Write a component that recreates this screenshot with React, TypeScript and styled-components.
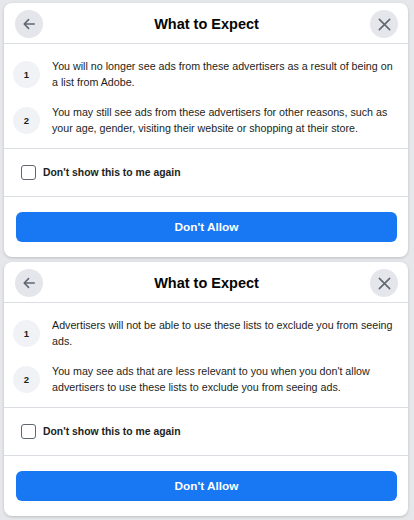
import React from "react";
import styled, { createGlobalStyle } from "styled-components";

type Step = { n: number; text: string };

type DialogProps = {
  steps: Step[];
};

const dialogs: Step[][] = [
  [
    {
      n: 1,
      text: "You will no longer see ads from these advertisers as a result of being on a list from Adobe.",
    },
    {
      n: 2,
      text: "You may still see ads from these advertisers for other reasons, such as your age, gender, visiting their website or shopping at their store.",
    },
  ],
  [
    {
      n: 1,
      text: "Advertisers will not be able to use these lists to exclude you from seeing ads.",
    },
    {
      n: 2,
      text: "You may see ads that are less relevant to you when you don't allow advertisers to use these lists to exclude you from seeing ads.",
    },
  ],
];

const BackIcon = () => (
  <svg width="14" height="14" viewBox="0 0 16 16" fill="none">
    <path d="M14 8H2.5M7.5 3L2.5 8l5 5" stroke="#606770" strokeWidth="1.8" strokeLinecap="round" strokeLinejoin="round" />
  </svg>
);

const CloseIcon = () => (
  <svg width="15" height="15" viewBox="0 0 16 16" fill="none">
    <path d="M2.5 2.5l11 11M13.5 2.5l-11 11" stroke="#606770" strokeWidth="1.7" strokeLinecap="round" />
  </svg>
);

const Dialog: React.FC<DialogProps> = ({ steps }) => (
  <Card>
    <Header>
      <RoundButton aria-label="Back">
        <BackIcon />
      </RoundButton>
      <Title>What to Expect</Title>
      <RoundButton aria-label="Close">
        <CloseIcon />
      </RoundButton>
    </Header>
    <Body>
      {steps.map((s) => (
        <StepRow key={s.n}>
          <Badge>{s.n}</Badge>
          <StepText>{s.text}</StepText>
        </StepRow>
      ))}
    </Body>
    <CheckRow>
      <Box />
      <CheckLabel>Don't show this to me again</CheckLabel>
    </CheckRow>
    <Footer>
      <PrimaryButton>Don't Allow</PrimaryButton>
    </Footer>
  </Card>
);

export default function App() {
  return (
    <>
      <GlobalStyle />
      <Page>
        {dialogs.map((steps, i) => (
          <Dialog key={i} steps={steps} />
        ))}
      </Page>
    </>
  );
}

const GlobalStyle = createGlobalStyle`
  html, body {
    margin: 0;
    background: #e6e7ea;
  }
  body {
    font-family: "Liberation Sans", Arial, sans-serif;
    color: #1c1e21;
  }
`;

const Page = styled.div`
  display: flex;
  flex-direction: column;
  gap: 5px;
  padding: 3px 6px 3px 4px;
  width: 414px;
  box-sizing: border-box;
`;

const Card = styled.div`
  background: #fff;
  border-radius: 8px;
  box-shadow: 0 1px 3px rgba(0, 0, 0, 0.18);
  overflow: hidden;
`;

const Header = styled.div`
  display: grid;
  grid-template-columns: 28px 1fr 28px;
  align-items: center;
  height: 40px;
  padding: 0 10px 0 11px;
  border-bottom: 1px solid #dadde1;
`;

const RoundButton = styled.div`
  width: 28px;
  height: 28px;
  border-radius: 50%;
  background: #e4e6eb;
  display: flex;
  align-items: center;
  justify-content: center;
  margin-top: 2px;
`;

const Title = styled.div`
  text-align: center;
  font-size: 14.5px;
  font-weight: 700;
  color: #050505;
  margin-top: 1px;
`;

const Body = styled.div`
  display: flex;
  flex-direction: column;
  gap: 14px;
  padding: 14px 12px 12px 9px;
  height: 105px;
  box-sizing: border-box;
  border-bottom: 1px solid #dadde1;
`;

const StepRow = styled.div`
  display: flex;
  align-items: center;
  gap: 12px;
`;

const Badge = styled.div`
  flex: none;
  width: 27px;
  height: 27px;
  border-radius: 50%;
  background: #f0f2f5;
  display: flex;
  align-items: center;
  justify-content: center;
  font-size: 9.5px;
  font-weight: 700;
  color: #1c1e21;
`;

const StepText = styled.div`
  font-size: 10.7px;
  line-height: 16px;
  color: #1c1e21;
`;

const CheckRow = styled.div`
  display: flex;
  align-items: center;
  gap: 7px;
  height: 47px;
  padding-left: 17px;
  border-bottom: 1px solid #dadde1;
`;

const Box = styled.div`
  width: 13px;
  height: 13px;
  border: 1.5px solid #606770;
  border-radius: 3px;
`;

const CheckLabel = styled.div`
  font-size: 10.4px;
  font-weight: 700;
  color: #1c1e21;
`;

const Footer = styled.div`
  padding: 15px 11px 15px 12px;
`;

const PrimaryButton = styled.div`
  height: 30px;
  border-radius: 6px;
  background: #1877f2;
  color: #fff;
  display: flex;
  align-items: center;
  justify-content: center;
  font-size: 11.8px;
  font-weight: 700;
`;
